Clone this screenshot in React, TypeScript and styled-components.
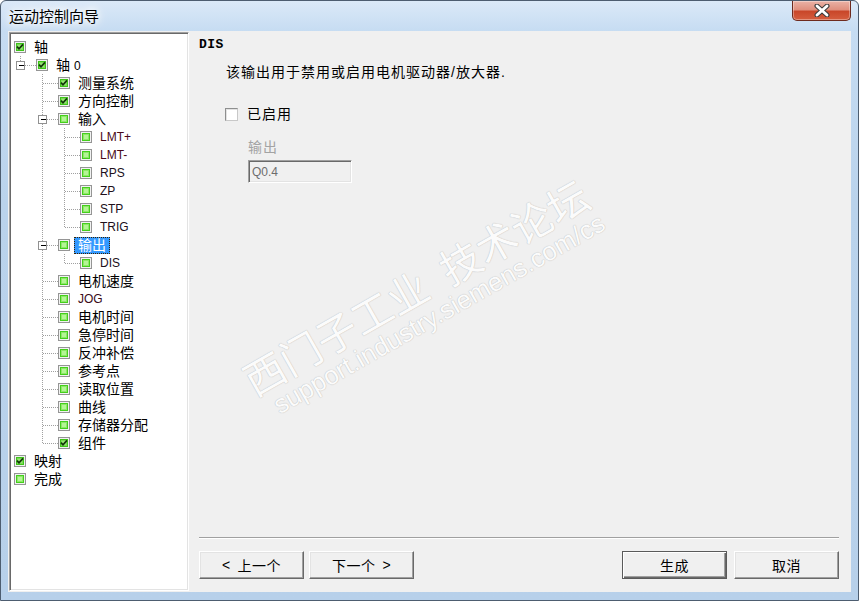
import React from "react";
import styled, { createGlobalStyle, css } from "styled-components";

const CJK = `"Noto Sans CJK SC", sans-serif`;
const UI = `"Liberation Sans", "Noto Sans CJK SC", sans-serif`;

const GlobalStyle = createGlobalStyle`
  html, body { margin: 0; padding: 0; background: #fff; }
  body { font-family: ${UI}; }
  #root { width: 859px; height: 601px; }
`;

const Window = styled.div`
  box-sizing: border-box;
  width: 859px;
  height: 601px;
  display: flex;
  flex-direction: column;
  border: 1px solid #4d5d70;
  border-radius: 6px 6px 0 0;
  background: linear-gradient(180deg, #dbe9f8 0px, #c6dcf2 30px, #bad3ec 200px, #b7d0ea 100%);
  overflow: hidden;
`;

const TitleBar = styled.div`
  height: 30px;
  flex: none;
  display: flex;
  align-items: flex-start;
`;

const Title = styled.div`
  font-family: ${CJK};
  font-size: 15px;
  line-height: 20px;
  color: #000;
  margin: 5px 0 0 8px;
  text-shadow: 0 0 6px #fff, 0 0 10px #fff, 0 0 14px #fff;
`;

const CloseButton = styled.div`
  box-sizing: border-box;
  margin-left: auto;
  margin-right: 7px;
  width: 59px;
  height: 20px;
  border: 1px solid #6e2a1e;
  border-top: none;
  border-radius: 0 0 5px 5px;
  background: linear-gradient(180deg, #eab2a6 0%, #e0907f 45%, #c9472a 55%, #d55e3f 100%);
  box-shadow: inset 0 0 0 1px rgba(255, 255, 255, 0.35);
  display: flex;
  align-items: center;
  justify-content: center;
`;

const Client = styled.div`
  flex: 1;
  display: flex;
  margin: 0 7px 8px 7px;
  background: #f0f0f0;
  min-height: 0;
`;

const Tree = styled.div`
  box-sizing: border-box;
  width: 180px;
  margin: 1px 0 1px 1px;
  padding-top: 5px;
  background: #fff;
  border: 1px solid;
  border-color: #a0a0a0 #fff #fff #a0a0a0;
  box-shadow: inset 1px 1px 0 #696969, inset -1px -1px 0 #e3e3e3;
`;

const Row = styled.div`
  height: 18px;
  display: flex;
  align-items: center;
  padding-left: 4px;
`;

const GutterSvg = styled.svg`
  flex: none;
  display: block;
`;

const CheckSvg = styled.svg`
  flex: none;
  display: block;
  margin-right: 4px;
`;

const Label = styled.span<{ $latin?: boolean; $selected?: boolean; $color?: string }>`
  box-sizing: border-box;
  height: 17px;
  padding: 0 3px;
  border: 1px solid transparent;
  font-family: ${UI};
  font-size: ${(p) => (p.$latin ? "12px" : "14px")};
  line-height: 15px;
  color: ${(p) => p.$color || "#000"};
  white-space: nowrap;
  ${(p) =>
    p.$selected &&
    css`
      background: #3399ff;
      color: #fff;
      border: 1px dotted #3a2200;
    `}
`;

const Small = styled.span`
  font-size: 12px;
  margin-left: 4px;
`;

const RightPanel = styled.div`
  flex: 1;
  position: relative;
  display: flex;
  flex-direction: column;
  padding: 0 12px 13px 10px;
  overflow: hidden;
`;

const Header = styled.div`
  margin-top: 6px;
  height: 16px;
  line-height: 16px;
  font-family: "Liberation Mono", monospace;
  font-weight: bold;
  font-size: 13px;
  letter-spacing: 0.5px;
  color: #000;
`;

const Description = styled.div`
  margin-top: 10px;
  padding-left: 27px;
  height: 18px;
  line-height: 18px;
  font-family: ${UI};
  font-size: 14px;
  letter-spacing: 1px;
  color: #000;
`;

const CheckRow = styled.div`
  margin-top: 24px;
  padding-left: 26px;
  height: 18px;
  display: flex;
  align-items: center;
  gap: 9px;
`;

const Box = styled.div`
  box-sizing: border-box;
  width: 13px;
  height: 13px;
  background: #fff;
  border: 1px solid;
  border-color: #8e8f8f #c8c8c8 #c8c8c8 #8e8f8f;
  box-shadow: inset 1px 1px 0 #e3e3e3;
`;

const CheckText = styled.span`
  font-family: ${UI};
  font-size: 14px;
  letter-spacing: 1px;
  line-height: 18px;
  color: #000;
`;

const FieldLabel = styled.div`
  margin-top: 15px;
  padding-left: 49px;
  height: 18px;
  line-height: 18px;
  font-family: ${UI};
  font-size: 14px;
  letter-spacing: 1px;
  color: #a3a3a3;
`;

const Field = styled.div`
  box-sizing: border-box;
  margin: 4px 0 0 49px;
  width: 104px;
  height: 23px;
  padding-left: 3px;
  display: flex;
  align-items: center;
  background: #f0f0f0;
  border: 1px solid;
  border-color: #a0a0a0 #fff #fff #a0a0a0;
  box-shadow: inset 1px 1px 0 #696969, inset -1px -1px 0 #e3e3e3;
  font-family: ${UI};
  font-size: 12px;
  color: #6d6d6d;
`;

const Separator = styled.div`
  margin-top: auto;
  border-top: 1px solid #a0a0a0;
  border-bottom: 1px solid #fff;
`;

const ButtonRow = styled.div`
  margin-top: 12px;
  display: flex;
`;

const Button = styled.div<{ $default?: boolean; $ml?: string }>`
  box-sizing: border-box;
  width: 105px;
  height: 28px;
  margin-left: ${(p) => p.$ml || "0"};
  display: flex;
  align-items: center;
  justify-content: center;
  font-family: ${UI};
  font-size: 14px;
  letter-spacing: 0.5px;
  color: #000;
  background: #f0f0f0;
  border: 1px solid;
  border-color: #fff #696969 #696969 #fff;
  box-shadow: inset -1px -1px 0 #a0a0a0, inset 1px 1px 0 #e3e3e3;
  ${(p) =>
    p.$default &&
    css`
      border: 1px solid #5a5a5a;
      box-shadow: inset 1px 1px 0 #fff, inset -1px -1px 0 #696969, inset -2px -2px 0 #a0a0a0;
    `}
`;

const ButtonSpacer = styled.span`
  display: inline-block;
  width: 7px;
`;

const Watermark = styled.div`
  position: absolute;
  left: 233px;
  top: 267px;
  transform: translate(-50%, -50%) rotate(-29.6deg);
  white-space: nowrap;
  text-align: center;
  pointer-events: none;
  color: #fbfbfb;
  text-shadow: 0 0 1px #bdbdbd, 0 0 1px #c8c8c8;
`;

const MarkCn = styled.div`
  font-family: ${CJK};
  font-size: 41px;
  line-height: 44px;
`;

const MarkGap = styled.span`
  display: inline-block;
  width: 20px;
`;

const MarkUrl = styled.div`
  font-family: "Liberation Sans", sans-serif;
  font-size: 26px;
  line-height: 28px;
  margin-left: 14px;
`;

type NodeDef = {
  level: number;
  label: React.ReactNode;
  checked?: boolean;
  latin?: boolean;
  selected?: boolean;
  color?: string;
};

const nodeDefs: NodeDef[] = [
  { level: 0, label: "轴", checked: true },
  { level: 1, label: <>轴<Small>0</Small></>, checked: true },
  { level: 2, label: "测量系统", checked: true },
  { level: 2, label: "方向控制", checked: true },
  { level: 2, label: "输入" },
  { level: 3, label: "LMT+", latin: true, color: "#4a0a18" },
  { level: 3, label: "LMT-", latin: true, color: "#4a0a18" },
  { level: 3, label: "RPS", latin: true, color: "#20101a" },
  { level: 3, label: "ZP", latin: true, color: "#20101a" },
  { level: 3, label: "STP", latin: true, color: "#20101a" },
  { level: 3, label: "TRIG", latin: true, color: "#20101a" },
  { level: 2, label: "输出", selected: true },
  { level: 3, label: "DIS", latin: true, color: "#20101a" },
  { level: 2, label: "电机速度" },
  { level: 2, label: "JOG", latin: true, color: "#3a0a18" },
  { level: 2, label: "电机时间" },
  { level: 2, label: "急停时间" },
  { level: 2, label: "反冲补偿" },
  { level: 2, label: "参考点" },
  { level: 2, label: "读取位置" },
  { level: 2, label: "曲线" },
  { level: 2, label: "存储器分配" },
  { level: 2, label: "组件", checked: true },
  { level: 0, label: "映射", checked: true },
  { level: 0, label: "完成" },
];

type RowData = NodeDef & { hasChildren: boolean; isLast: boolean; cols: boolean[] };

function buildRows(defs: NodeDef[]): RowData[] {
  const lastAt: boolean[] = [];
  return defs.map((n, i) => {
    const hasChildren = i + 1 < defs.length && defs[i + 1].level > n.level;
    let isLast = true;
    for (let j = i + 1; j < defs.length; j++) {
      if (defs[j].level < n.level) break;
      if (defs[j].level === n.level) {
        isLast = false;
        break;
      }
    }
    const cols = Array.from({ length: Math.max(0, n.level - 1) }, (_, k) => !lastAt[k + 1]);
    lastAt[n.level] = isLast;
    return { ...n, hasChildren, isLast, cols };
  });
}

const rows = buildRows(nodeDefs);

const DOT = "#a0a0a0";

function Gutter({ row }: { row: RowData }) {
  if (row.level === 0) return null;
  const w = row.level * 22;
  const cx = 6 + 22 * (row.level - 1) + 0.5;
  return (
    <GutterSvg width={w} height={18} viewBox={`0 0 ${w} 18`} shapeRendering="crispEdges">
      {row.cols.map((on, k) =>
        on ? (
          <line key={k} x1={6 + 22 * k + 0.5} y1={0} x2={6 + 22 * k + 0.5} y2={18} stroke={DOT} strokeDasharray="1 1" />
        ) : null
      )}
      <line x1={cx} y1={0} x2={cx} y2={row.isLast ? 10 : 18} stroke={DOT} strokeDasharray="1 1" />
      <line x1={cx} y1={9.5} x2={w} y2={9.5} stroke={DOT} strokeDasharray="1 1" />
      {row.hasChildren && (
        <>
          <rect x={cx - 4} y={5.5} width={8} height={8} fill="#fff" stroke="#919191" />
          <line x1={cx - 2} y1={9.5} x2={cx + 3} y2={9.5} stroke="#000" />
        </>
      )}
    </GutterSvg>
  );
}

function TreeCheck({ checked }: { checked?: boolean }) {
  return (
    <CheckSvg width={12} height={12} viewBox="0 0 12 12">
      <rect x={0.5} y={0.5} width={11} height={11} fill="#f2f2f2" stroke="#959595" />
      <rect x={2} y={2} width={8} height={8} fill={checked ? "#3dc418" : "#44cf1c"} />
      <rect x={3} y={3} width={6} height={6} fill={checked ? "#7ada55" : "#8ee868"} />
      <rect x={4} y={4} width={4} height={4} fill={checked ? "#98e474" : "#b4f596"} />
      {checked && (
        <path d="M3 5.6 L5 7.8 L9 3.4" fill="none" stroke="#12360a" strokeWidth={1.7} />
      )}
    </CheckSvg>
  );
}

function CloseGlyph() {
  return (
    <svg width={16} height={13} viewBox="0 0 16 13">
      <path d="M3 2 L13 11 M13 2 L3 11" stroke="#3e3e3e" strokeWidth={5} strokeLinecap="round" />
      <path d="M3 2 L13 11 M13 2 L3 11" stroke="#fff" strokeWidth={2.8} strokeLinecap="round" />
    </svg>
  );
}

export default function App() {
  return (
    <>
      <GlobalStyle />
      <Window>
        <TitleBar>
          <Title>运动控制向导</Title>
          <CloseButton>
            <CloseGlyph />
          </CloseButton>
        </TitleBar>
        <Client>
          <Tree>
            {rows.map((r, i) => (
              <Row key={i}>
                <Gutter row={r} />
                <TreeCheck checked={r.checked} />
                <Label $latin={r.latin} $selected={r.selected} $color={r.color}>
                  {r.label}
                </Label>
              </Row>
            ))}
          </Tree>
          <RightPanel>
            <Watermark>
              <MarkCn>
                西门子工业<MarkGap />技术论坛
              </MarkCn>
              <MarkUrl>support.industry.siemens.com/cs</MarkUrl>
            </Watermark>
            <Header>DIS</Header>
            <Description>该输出用于禁用或启用电机驱动器/放大器.</Description>
            <CheckRow>
              <Box />
              <CheckText>已启用</CheckText>
            </CheckRow>
            <FieldLabel>输出</FieldLabel>
            <Field>Q0.4</Field>
            <Separator />
            <ButtonRow>
              <Button>
                &lt;<ButtonSpacer />上一个
              </Button>
              <Button $ml="5px">
                下一个<ButtonSpacer />&gt;
              </Button>
              <Button $default $ml="auto">
                生成
              </Button>
              <Button $ml="7px">取消</Button>
            </ButtonRow>
          </RightPanel>
        </Client>
      </Window>
    </>
  );
}
